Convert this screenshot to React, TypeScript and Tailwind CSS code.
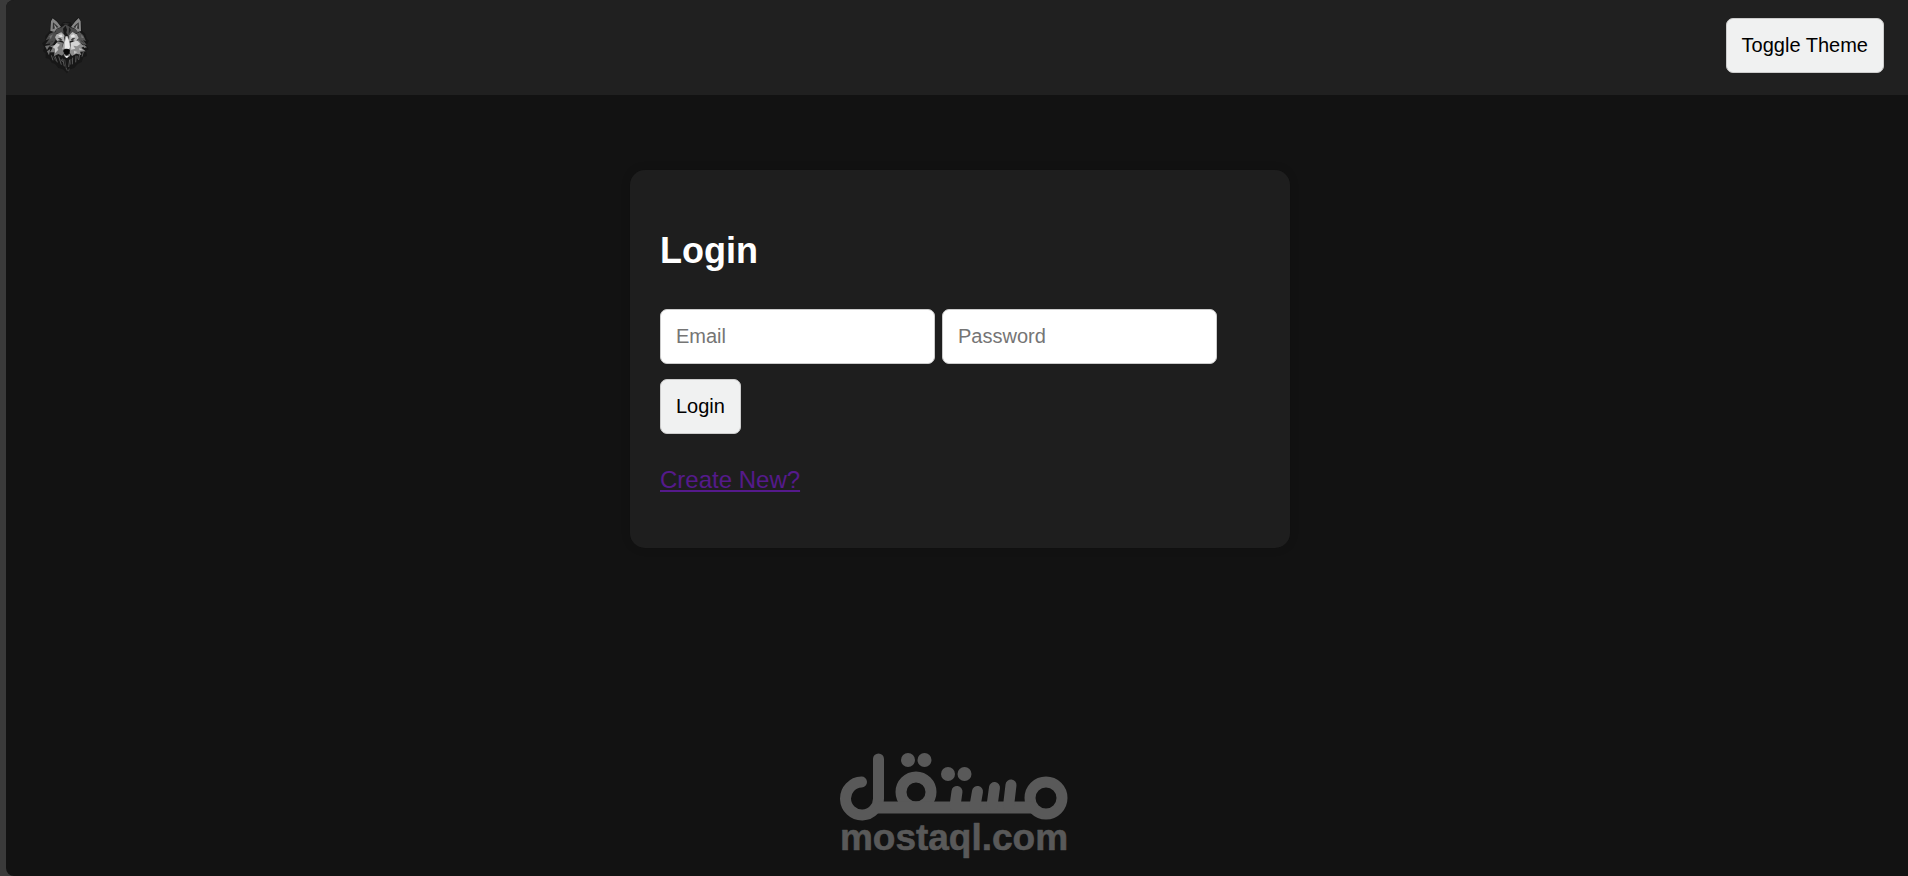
import React, { useState } from "react";

function WolfLogo() {
  return (
    <svg className="h-[66px] w-[60px]" viewBox="0 0 180 198" role="img" aria-label="Wolf">
      {/* mane */}
      <path
        d="M44 64L46 34L52 22L64 30L76 46L84 36L106 36L112 46L120 31L131 21L138 34L141 62L151 72L155 86L162 92L155 104L161 118L153 122L156 138L145 142L140 156L128 162L118 174L106 178L96 190L84 178L70 174L60 162L50 158L42 146L32 144L32 130L24 124L28 112L21 100L31 92L31 78Z"
        fill="#171717"
      />
      {/* ears */}
      <path d="M46 62L48 34L53 25L66 35L78 51L66 56L58 66Z" fill="#858585" />
      <path d="M53 58L54 37L64 45L71 52L62 54Z" fill="#333333" />
      <path d="M57 42L60 56L65 53Z" fill="#a0a0a0" />
      <path d="M138 63L137 34L131 24L120 35L108 51L120 56L128 66Z" fill="#898989" />
      <path d="M132 57L131 37L121 45L115 52L123 54Z" fill="#303030" />
      <path d="M128 42L126 56L121 52Z" fill="#9a9a9a" />
      {/* forehead and side fur */}
      <path d="M65 57L78 53L92 43L108 53L122 58L130 70L116 69L101 82L95 68L88 82L76 69L58 72Z" fill="#4a4a4a" />
      <path d="M82 41L92 38L104 41L96 46Z" fill="#2c2c2c" />
      <path d="M92 47L96 59L91 80L86 70L84 56Z" fill="#161616" />
      <path d="M102 51L108 60L101 73Z" fill="#202020" />
      <path d="M57 65L43 72L32 91L43 87L31 103L46 100L41 112L54 103L65 85L75 80Z" fill="#4c4c4c" />
      <path d="M134 66L145 76L153 94L144 90L155 105L141 102L122 84L112 78Z" fill="#565656" />
      <path d="M43 79L54 73L47 88ZM30 108L45 105L36 120ZM36 124L46 117L42 136Z" fill="#707070" />
      <path d="M138 74L147 83L140 84ZM145 103L156 112L147 114Z" fill="#7b7b7b" />
      {/* brows and eyes */}
      <path d="M65 73L79 67L88 76L87 96L78 91L66 93L60 82Z" fill="#adadad" />
      <path d="M125 73L112 66L103 76L102 95L112 91L122 94L131 84Z" fill="#b8b8b8" />
      <path d="M68 85L76 84L83 91L75 90Z" fill="#3a3a3a" />
      <path d="M121 85L113 84L106 91L114 90Z" fill="#3c3c3c" />
      <path d="M70 76L80 73L83 81L75 81Z" fill="#e1e1e1" />
      <path d="M107 77L115 73L122 79L110 83Z" fill="#e6e6e6" />
      {/* cheeks */}
      <path d="M68 94L84 98L82 112L89 127L81 137L70 132L57 139L58 127L45 127L53 113L44 108L60 105Z" fill="#7b7b7b" />
      <path d="M65 99L75 104L67 113L70 119L60 130L60 116L53 112Z" fill="#c8c8c8" />
      <path d="M118 94L132 91L139 102L149 109L139 113L152 124L135 125L139 135L124 131L111 138L103 126L108 110L105 98Z" fill="#909090" />
      <path d="M108 98L126 91L136 102L126 109L115 107L121 116L108 119Z" fill="#d5d5d5" />
      <path d="M132 114L143 119L133 121ZM117 122L128 126L117 132Z" fill="#bebebe" />
      {/* muzzle */}
      <path d="M91 79L99 79L105 99L109 117L101 128L89 128L81 116L85 101Z" fill="#a2a2a2" />
      <path d="M95 78L101 91L105 112L99 119L89 115L89 98Z" fill="#e8e8e8" />
      <path d="M85 119Q95 113 105 119L104 127L97 133L92 133L85 126Z" fill="#070707" />
      <path d="M85 130L95 137L106 130L105 138L95 144L87 138Z" fill="#8a8a8a" />
      <path d="M90 138L101 138L97 143L93 143Z" fill="#eeeeee" />
      {/* chest fur */}
      <path
        d="M49 136L54 151M60 139L67 157M71 139L79 164M83 146L88 169M104 149L101 171M113 143L112 163M123 137L122 157M134 132L131 150M145 126L141 140M78 148L83 156"
        stroke="#585858"
        strokeWidth="3"
        fill="none"
      />
      <path d="M55 139L62 152M89 148L94 178M108 147L106 164M128 137L126 148M40 98L54 94M138 92L147 97" stroke="#3e3e3e" strokeWidth="3" fill="none" />
      <path d="M94 174L97 183M103 176L100 184" stroke="#555555" strokeWidth="2" />
    </svg>
  );
}

function Watermark() {
  return (
    <div className="pointer-events-none absolute right-0 bottom-1 left-0.5 flex justify-center">
      <svg className="h-[132px] w-[270px]" viewBox="0 0 270 132" role="img" aria-label="mostaql.com">
        <g stroke="#595959" strokeWidth="11" strokeLinecap="round" fill="none">
          <circle cx="226" cy="58" r="16" />
          <circle cx="96" cy="52" r="15" />
          <path d="M58.5 19V58A16.5 16.5 0 1 1 41.5 42" />
          <path d="M58 67.5H212" strokeLinecap="butt" strokeWidth="12" />
          <path d="M191 45L188.5 66M174.5 47.5L172 66M157.5 51.5L155 66M137 51.5L135 66" />
        </g>
        <g fill="#595959">
          <circle cx="88" cy="20" r="7" />
          <circle cx="104.5" cy="20" r="7" />
          <circle cx="128" cy="34" r="7" />
          <circle cx="144.5" cy="34" r="7" />
        </g>
        <text
          x="134"
          y="110"
          textAnchor="middle"
          fill="#595959"
          stroke="#595959"
          strokeWidth="0.6"
          strokeLinejoin="round"
          className="font-['Liberation_Sans',Arial,sans-serif] text-[37px] font-bold"
        >
          mostaql.com
        </text>
      </svg>
    </div>
  );
}

const control = "rounded-[7px] border border-[#cccccc] p-[15px] text-[20px] leading-[23px]";

export default function App() {
  const [dark, setDark] = useState(true);

  return (
    <div className="relative flex min-h-screen bg-[#3a3a3a] pl-1.5 font-['Liberation_Sans',Arial,sans-serif]">
      <div className={`flex-1 overflow-hidden rounded-l-lg ${dark ? "bg-[#121212] text-white" : "bg-white text-black"}`}>
        <header className={`flex items-start justify-between pr-6 pb-[19px] pl-[29px] ${dark ? "bg-[#202020]" : "bg-gray-100"}`}>
          <div className="pt-2.5">
            <WolfLogo />
          </div>
          <div className="pt-[18px]">
            <button type="button" onClick={() => setDark(!dark)} className={`${control} bg-[#f0f1f1] text-black`}>
              Toggle Theme
            </button>
          </div>
        </header>

        <main className="px-4 pt-[75px] pl-[22px]">
          <form
            onSubmit={(e) => e.preventDefault()}
            className={`mx-auto max-w-[660px] rounded-[15px] px-[30px] py-[54px] shadow-[0_0_10px_rgba(0,0,0,0.15)] ${dark ? "bg-[#1e1e1e]" : "bg-gray-50"}`}
          >
            <h1 className="pt-1.5 text-[36px] leading-[41px] font-bold">Login</h1>
            <div className="mt-[38px] flex flex-wrap gap-x-[7px] gap-y-[15px]">
              <input
                type="email"
                aria-label="Email"
                placeholder="Email"
                className={`${control} w-[275px] bg-white text-black placeholder:text-[#757575]`}
              />
              <input
                type="password"
                aria-label="Password"
                placeholder="Password"
                className={`${control} w-[275px] bg-white text-black placeholder:text-[#757575]`}
              />
            </div>
            <button type="submit" className={`${control} mt-[15px] bg-[#f0f1f1] text-black`}>
              Login
            </button>
            <p className="mt-8 text-[24px] leading-[28px]">
              <a href="#" className="text-[#551a8b] underline">
                Create New?
              </a>
            </p>
          </form>
        </main>
      </div>
      <Watermark />
    </div>
  );
}
